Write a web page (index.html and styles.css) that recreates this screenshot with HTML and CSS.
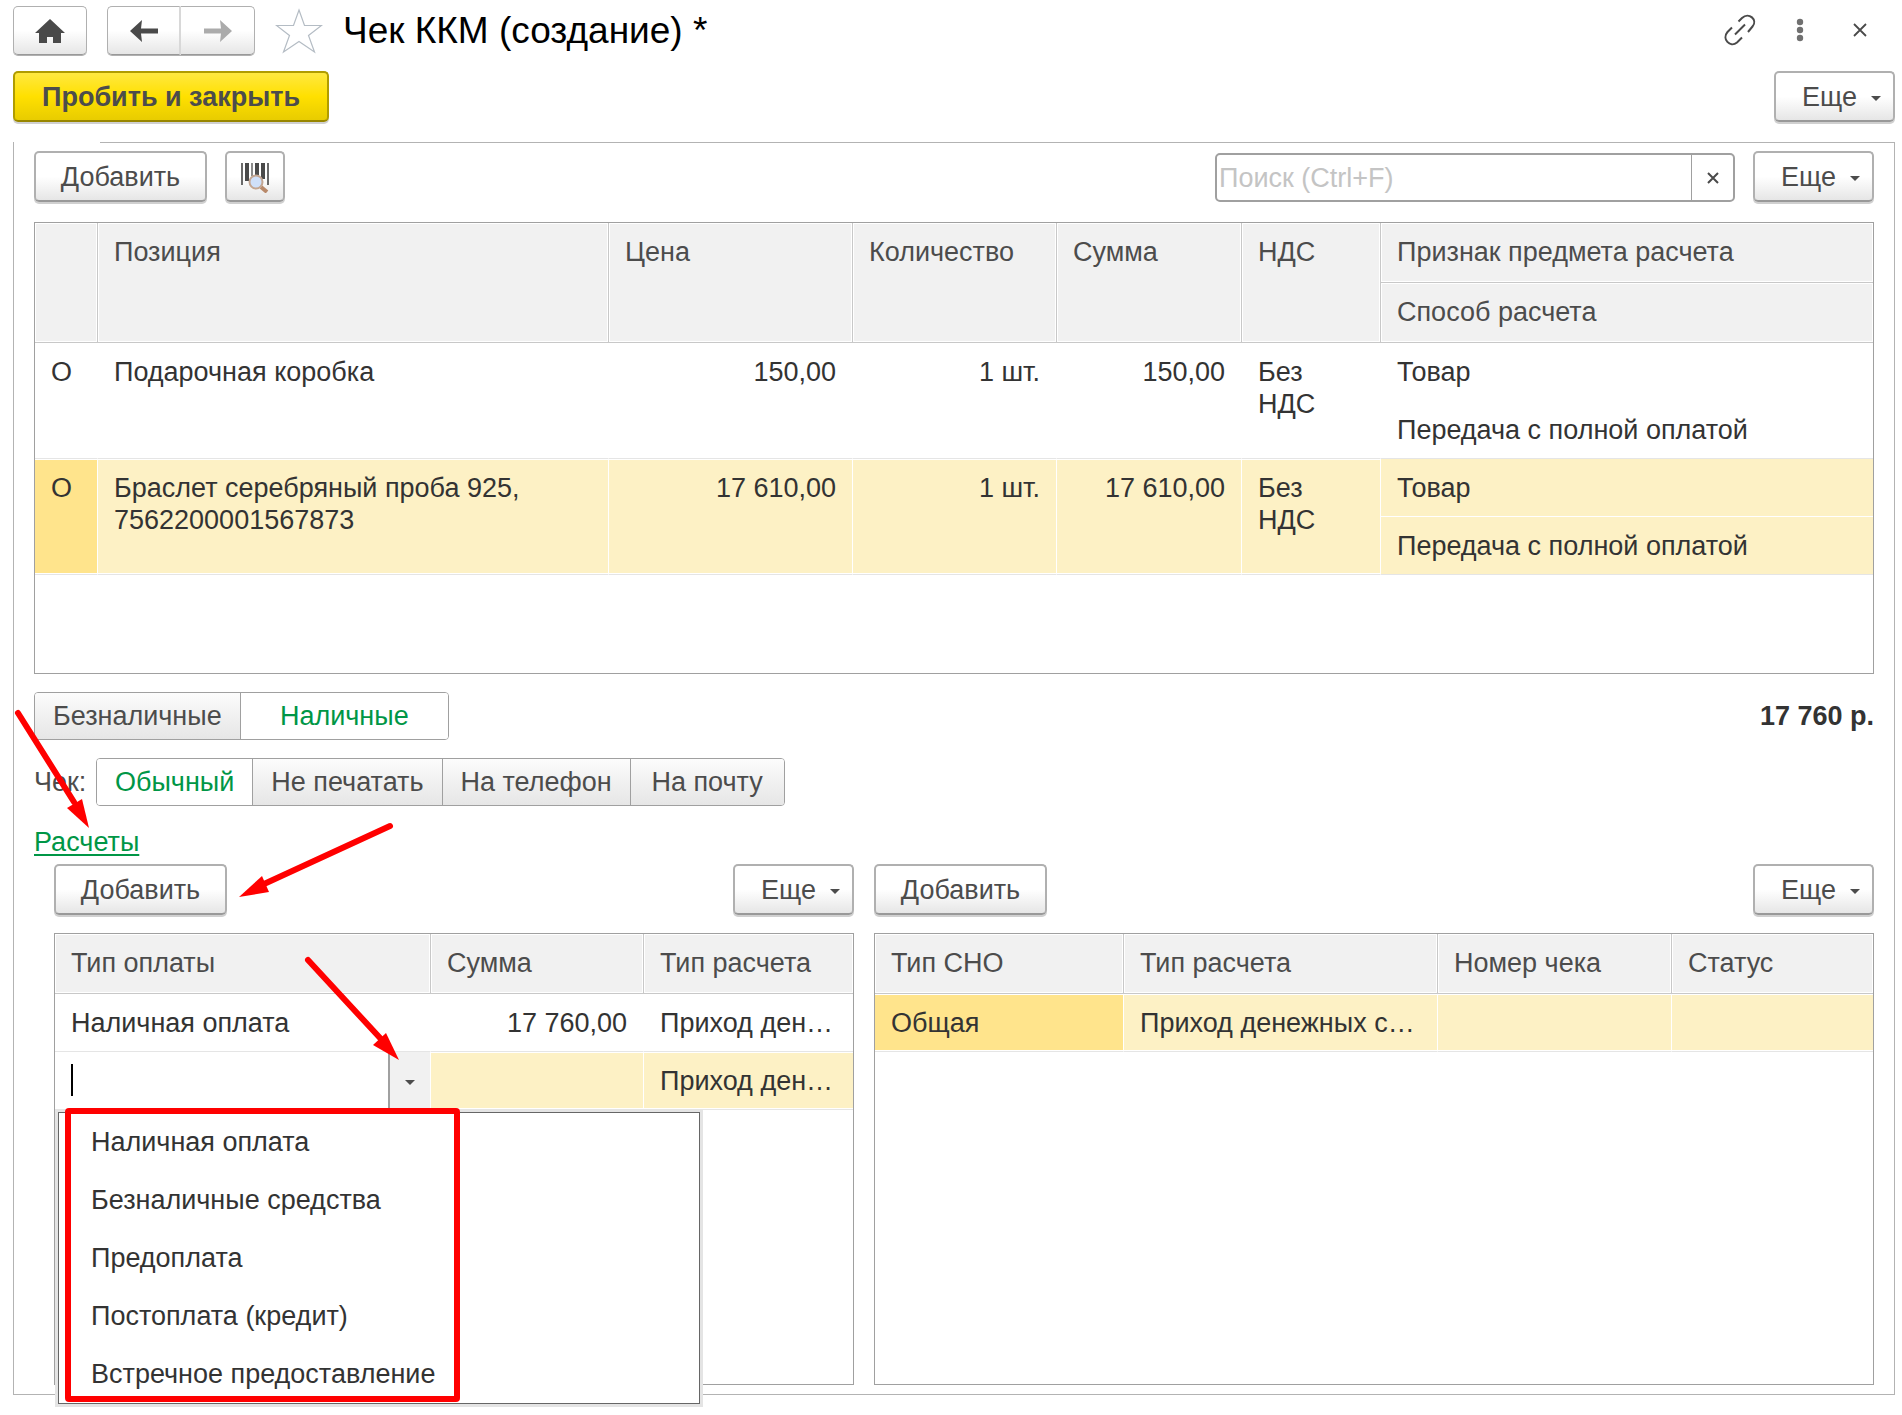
FILE: index.html
```html
<!DOCTYPE html>
<html lang="ru">
<head>
    <meta charset="UTF-8">
    <meta name="viewport" content="width=device-width, initial-scale=1.0">
    <title>Чек ККМ (создание) *</title>
    <link rel="stylesheet" href="styles.css">
</head>
<body>
    <header class="title-bar">
        <button class="btn btn-home" type="button" aria-label="Домой">
            <svg width="30" height="26" viewBox="0 0 30 26"><path d="M15 1 30 15H26V25H18V19H12V25H4V15H0Z" fill="#4a4a4a"/></svg>
        </button>
        <div class="nav-buttons">
            <button class="btn" type="button" aria-label="Назад">
                <svg width="28" height="24" viewBox="0 0 28 24"><path d="M0 12 12 1 11 9.500H28V14.500H11L12 23Z" fill="#4a4a4a"/></svg>
            </button>
            <button class="btn" type="button" aria-label="Вперед">
                <svg width="28" height="24" viewBox="0 0 28 24"><path d="M28 12 16 1 17 9.500H0V14.500H17L16 23Z" fill="#ababab"/></svg>
            </button>
        </div>
        <button class="icon-btn btn-star" type="button" aria-label="Избранное">
            <svg width="48" height="46" viewBox="0 0 48 46"><path d="M24 2 29.500 17.500H46.500L33.500 27.500 39.500 44 24 33.500 8.500 44 14.500 27.500 1.500 17.500H18.500Z" fill="#fff" stroke="#b4bcc4" stroke-width="1.200"/></svg>
        </button>
        <h1>Чек ККМ (создание) *</h1>
        <div class="window-buttons">
            <button class="icon-btn" type="button" aria-label="Ссылка">
                <svg width="32" height="32" viewBox="0 0 32 32" fill="none" stroke="#4a4a4a" stroke-width="2"><path d="M14.500 7.500 18 4C25-2.500 34 6 28.500 12.500L24 18M8 13.500 3.500 18C-2.500 25 6 34 13 28.500L18 23.500M11 20.500 21 10.500"/></svg>
            </button>
            <button class="icon-btn" type="button" aria-label="Меню">
                <svg width="8" height="24" viewBox="0 0 8 24" fill="#707070"><circle cx="4" cy="4" r="3.200"/><circle cx="4" cy="12" r="3.200"/><circle cx="4" cy="20" r="3.200"/></svg>
            </button>
            <button class="icon-btn" type="button" aria-label="Закрыть">
                <svg width="14" height="14" viewBox="0 0 14 14"><path d="M1 1 13 13M13 1 1 13" stroke="#4a4a4a" stroke-width="1.800"/></svg>
            </button>
        </div>
    </header>

    <div class="toolbar">
        <button class="btn btn-primary" type="button">Пробить и закрыть</button>
        <button class="btn btn-more" type="button">Еще</button>
    </div>

    <main class="form">
        <div class="toolbar">
            <div class="toolbar-group">
                <button class="btn btn-add" type="button">Добавить</button>
                <button class="btn btn-scan" type="button" aria-label="Поиск по штрихкоду">
                    <svg width="30" height="32" viewBox="0 0 30 32">
                        <path d="M2 2V24M28 2V24" stroke="#6a6a6a" stroke-width="2"/>
                        <path d="M7 2V20M17 2V14M23 2V18" stroke="#4a4a4a" stroke-width="4"/>
                        <path d="M12 2V15" stroke="#8a8a8a" stroke-width="2"/>
                        <path d="M21 26 27 31" stroke="#b8896a" stroke-width="4"/>
                        <circle cx="16" cy="21" r="6.500" fill="#cfe0fa" stroke="#c3a692" stroke-width="2"/>
                    </svg>
                </button>
            </div>
            <div class="toolbar-group">
                <div class="search">
                    <input type="text" placeholder="Поиск (Ctrl+F)" aria-label="Поиск">
                    <button type="button" aria-label="Очистить">
                        <svg width="12" height="12" viewBox="0 0 12 12"><path d="M1 1 11 11M11 1 1 11" stroke="#4a4a4a" stroke-width="2"/></svg>
                    </button>
                </div>
                <button class="btn btn-more" type="button">Еще</button>
            </div>
        </div>

        <div class="grid">
            <table>
                <colgroup>
                    <col class="c-mark"><col class="c-name"><col class="c-price"><col class="c-count"><col class="c-sum"><col class="c-vat"><col>
                </colgroup>
                <thead>
                    <tr>
                        <th rowspan="2"></th>
                        <th rowspan="2">Позиция</th>
                        <th rowspan="2">Цена</th>
                        <th rowspan="2">Количество</th>
                        <th rowspan="2">Сумма</th>
                        <th rowspan="2">НДС</th>
                        <th>Признак предмета расчета</th>
                    </tr>
                    <tr>
                        <th>Способ расчета</th>
                    </tr>
                </thead>
                <tbody>
                    <tr>
                        <td rowspan="2">О</td>
                        <td rowspan="2">Подарочная коробка</td>
                        <td rowspan="2" class="num">150,00</td>
                        <td rowspan="2" class="num">1 шт.</td>
                        <td rowspan="2" class="num">150,00</td>
                        <td rowspan="2">Без НДС</td>
                        <td class="upper">Товар</td>
                    </tr>
                    <tr>
                        <td>Передача с полной оплатой</td>
                    </tr>
                </tbody>
                <tbody class="selected">
                    <tr>
                        <td rowspan="2" class="current">О</td>
                        <td rowspan="2">Браслет серебряный проба 925, 7562200001567873</td>
                        <td rowspan="2" class="num">17 610,00</td>
                        <td rowspan="2" class="num">1 шт.</td>
                        <td rowspan="2" class="num">17 610,00</td>
                        <td rowspan="2">Без НДС</td>
                        <td class="upper">Товар</td>
                    </tr>
                    <tr>
                        <td>Передача с полной оплатой</td>
                    </tr>
                </tbody>
            </table>
        </div>

        <div class="row row-between">
            <div class="tumbler tumbler-wide" role="radiogroup" aria-label="Вид оплаты">
                <label><input type="radio" name="pay"><span>Безналичные</span></label>
                <label><input type="radio" name="pay" checked><span>Наличные</span></label>
            </div>
            <strong class="total">17 760 р.</strong>
        </div>

        <div class="row">
            <span class="row-label" id="receipt-label">Чек:</span>
            <div class="tumbler" role="radiogroup" aria-labelledby="receipt-label">
                <label><input type="radio" name="receipt" checked><span>Обычный</span></label>
                <label><input type="radio" name="receipt"><span>Не печатать</span></label>
                <label><input type="radio" name="receipt"><span>На телефон</span></label>
                <label><input type="radio" name="receipt"><span>На почту</span></label>
            </div>
        </div>

        <div class="section-title">
            <a href="#payments">Расчеты</a>
            <svg class="arrow arrow-link" width="80" height="122" viewBox="0 0 80 122"><path d="M4 4 60 93" stroke="#f00" stroke-width="6" stroke-linecap="round"/><path d="M75 119 53 99 68 90Z" fill="#f00"/></svg>
        </div>

        <div class="panels" id="payments">
            <section class="panel">
                <div class="toolbar">
                    <button class="btn btn-add" type="button">Добавить</button>
                    <button class="btn btn-more" type="button">Еще</button>
                </div>
                <div class="grid">
                    <table>
                        <colgroup><col class="c-pay"><col class="c-pay-sum"><col></colgroup>
                        <thead>
                            <tr><th>Тип оплаты</th><th>Сумма</th><th>Тип расчета</th></tr>
                        </thead>
                        <tbody>
                            <tr>
                                <td>Наличная оплата</td>
                                <td class="num">17 760,00</td>
                                <td class="clip">Приход ден…</td>
                            </tr>
                        </tbody>
                        <tbody class="selected">
                            <tr>
                                <td class="edit-cell">
                                    <div class="combo">
                                        <input type="text" aria-label="Тип оплаты">
                                        <button type="button" aria-label="Выбрать"><span class="caret"></span></button>
                                    </div>
                                </td>
                                <td></td>
                                <td class="clip">Приход ден…</td>
                            </tr>
                        </tbody>
                    </table>
                    <ul class="dropdown" role="listbox" aria-label="Тип оплаты">
                        <li role="option">Наличная оплата</li>
                        <li role="option">Безналичные средства</li>
                        <li role="option">Предоплата</li>
                        <li role="option">Постоплата (кредит)</li>
                        <li role="option">Встречное предоставление</li>
                    </ul>
                </div>
                <svg class="arrow arrow-add" width="160" height="80" viewBox="0 0 160 80"><path d="M154 4 28 62" stroke="#f00" stroke-width="6" stroke-linecap="round"/><path d="M3 75 26 54 33 70Z" fill="#f00"/></svg>
                <svg class="arrow arrow-choose" width="100" height="108" viewBox="0 0 100 108"><path d="M4 4 77 83" stroke="#f00" stroke-width="6" stroke-linecap="round"/><path d="M95 104 69 89 82 77Z" fill="#f00"/></svg>
            </section>

            <section class="panel">
                <div class="toolbar">
                    <button class="btn btn-add" type="button">Добавить</button>
                    <button class="btn btn-more" type="button">Еще</button>
                </div>
                <div class="grid">
                    <table>
                        <colgroup><col class="c-tax"><col class="c-kind"><col class="c-number"><col></colgroup>
                        <thead>
                            <tr><th>Тип СНО</th><th>Тип расчета</th><th>Номер чека</th><th>Статус</th></tr>
                        </thead>
                        <tbody class="selected">
                            <tr>
                                <td class="current">Общая</td>
                                <td class="clip">Приход денежных с…</td>
                                <td></td>
                                <td></td>
                            </tr>
                        </tbody>
                    </table>
                </div>
            </section>
        </div>
    </main>
</body>
</html>
```

FILE: styles.css
```css
*,
*::before,
*::after {
    box-sizing: border-box;
}

body {
    margin: 0;
    padding: 6px 7px 20px 13px;
    background-color: #fff;
    color: #333;
    font-family: "Liberation Sans", Arial, sans-serif;
    font-size: 27px;
    line-height: 32px;
}

button,
input {
    font: inherit;
    color: inherit;
}

svg {
    display: block;
}

/* Buttons */
.btn {
    display: flex;
    align-items: center;
    justify-content: center;
    height: 51px;
    padding: 0 27px;
    border: 2px solid #b0b0b0;
    border-bottom-color: #999;
    border-radius: 5px;
    background: linear-gradient(#fff 50%, #e6e6e6);
    box-shadow: 0 2px 0 #d0d0d0;
    color: #4c4c4c;
    white-space: nowrap;
}

.btn-primary {
    border-color: #b09c00;
    border-bottom-color: #988600;
    background: linear-gradient(#ffe840, #ffe000 50%, #e8cc00);
    font-weight: bold;
}

.btn-add {
    width: 173px;
}

.btn-more {
    width: 121px;
    gap: 14px;
    padding: 0 12px 0 26px;
}

.btn-more::after,
.caret {
    content: "";
    margin-top: 4px;
    border: 5px solid transparent;
    border-top-color: #4c4c4c;
    border-bottom: 0;
}

.btn-scan {
    width: 60px;
    padding: 0;
}

.icon-btn {
    display: flex;
    align-items: center;
    justify-content: center;
    width: 60px;
    height: 46px;
    padding: 0;
    border: 0;
    background: none;
}

/* Title bar */
.title-bar {
    display: flex;
    align-items: center;
    height: 49px;
    margin-bottom: 16px;
}

.title-bar .btn {
    width: 74px;
    height: 49px;
    padding: 0;
    border-width: 1px;
    box-shadow: 0 1px 0 #b0b0b0;
}

.nav-buttons {
    display: flex;
    margin-left: 20px;
}

.nav-buttons .btn:first-child {
    border-right: 2px solid #d8d8d8;
    border-radius: 5px 0 0 5px;
}

.nav-buttons .btn:last-child {
    border-left: 0;
    border-radius: 0 5px 5px 0;
}

.btn-star {
    width: 48px;
    margin: 0 20px;
}

h1 {
    margin: 0;
    color: #000;
    font-size: 37px;
    font-weight: normal;
    line-height: 40px;
}

.window-buttons {
    display: flex;
    margin-left: auto;
    padding: 0 5px 2px 0;
}

/* Toolbars */
.toolbar {
    display: flex;
    align-items: flex-end;
    justify-content: space-between;
    margin-bottom: 20px;
}

.toolbar-group {
    display: flex;
    align-items: flex-end;
    gap: 18px;
}

.search {
    display: flex;
    width: 520px;
    height: 49px;
    border: 2px solid #a0a0a0;
    border-radius: 5px;
}

.search input {
    flex: 1;
    min-width: 0;
    padding: 0 2px;
    border: 0;
    background: none;
    outline: none;
}

.search input::placeholder {
    color: #c4c4c4;
    opacity: 1;
}

.search button {
    display: flex;
    align-items: center;
    justify-content: center;
    width: 42px;
    padding: 0;
    border: 0;
    border-left: 1px solid #a0a0a0;
    background: none;
}

/* The top line of the frame starts after the group caption gap */
.form {
    padding: 9px 20px;
    border: 1px solid #b3b3b3;
    border-top: 0;
    background: linear-gradient(#b3b3b3, #b3b3b3) 86px 0 / 100% 1px no-repeat;
}

/* Tables */
.grid {
    position: relative;
    min-height: 452px;
    border: 1px solid #a0a0a0;
}

table {
    width: 100%;
    table-layout: fixed;
    border-collapse: separate;
    border-spacing: 0;
}

th,
td {
    height: 58px;
    padding: 13px 16px 12px;
    border-right: 1px solid transparent;
    border-bottom: 1px solid #e5e5e5;
    text-align: left;
    vertical-align: top;
    font-weight: normal;
}

th {
    height: 60px;
    border-color: #c8c8c8;
    background-color: #f1f1f1;
    box-shadow: inset 0 0 0 1px #fff;
    color: #4c4c4c;
}

th:last-child,
td:last-child {
    border-right: 0;
}

.num {
    text-align: right;
}

.upper {
    border-bottom-color: transparent;
}

.clip {
    overflow: hidden;
    text-overflow: ellipsis;
    white-space: nowrap;
}

.selected td {
    border-right-color: #fff;
    background-color: #fdf1c5;
    background-clip: padding-box;
    box-shadow: inset 0 -1px 0 #fff, inset 0 1px 0 #fff;
}

.selected .upper {
    border-bottom-color: #fff;
}

.selected .upper,
.selected tr:nth-child(2) td {
    box-shadow: none;
}

.selected .current {
    background-color: #ffe48c;
}

.c-mark { width: 63px; }
.c-name { width: 511px; }
.c-price { width: 244px; }
.c-count { width: 204px; }
.c-sum { width: 185px; }
.c-vat { width: 139px; }
.c-pay { width: 376px; }
.c-pay-sum { width: 213px; }
.c-tax { width: 249px; }
.c-kind { width: 314px; }
.c-number { width: 234px; }

/* Switches */
.row {
    display: flex;
    align-items: center;
    margin-top: 18px;
}

.row-between {
    justify-content: space-between;
}

.row-label {
    width: 62px;
    color: #4c4c4c;
    white-space: nowrap;
}

.total {
    white-space: nowrap;
}

.tumbler {
    display: flex;
    overflow: hidden;
    border: 1px solid #a0a0a0;
    border-radius: 4px;
}

.tumbler label {
    position: relative;
    min-width: 154px;
}

.tumbler label + label {
    border-left: 1px solid #a0a0a0;
}

.tumbler-wide {
    width: 415px;
}

.tumbler-wide label:last-child {
    flex: 1;
}

.tumbler input {
    position: absolute;
    opacity: 0;
}

.tumbler span {
    display: block;
    padding: 7px 18px;
    background: linear-gradient(#fcfcfc, #e6e6e6);
    color: #4c4c4c;
    text-align: center;
    white-space: nowrap;
}

.tumbler input:checked + span {
    background: #fff;
    color: #009646;
}

/* Payments */
.section-title {
    position: relative;
    margin: 20px 0 6px;
}

.section-title a {
    color: #009646;
    text-decoration-thickness: 2px;
    text-underline-offset: 3px;
    text-decoration-skip-ink: none;
}

.panels {
    display: grid;
    grid-template-columns: 4fr 5fr;
    gap: 20px;
    padding-left: 20px;
}

.panel {
    position: relative;
    min-width: 0;
}

.panel .toolbar {
    margin-bottom: 18px;
}

.edit-cell {
    padding: 0;
}

.combo {
    display: flex;
    height: 57px;
}

/* Text cursor of the active cell */
.combo input {
    flex: 1;
    min-width: 0;
    padding: 0 16px;
    border: 0;
    background: linear-gradient(#000, #000) 16px 12px / 2px 32px no-repeat #fff;
    outline: none;
}

.combo button {
    display: flex;
    align-items: center;
    justify-content: center;
    width: 42px;
    padding: 0;
    border: 0;
    border-left: 2px solid #a0a0a0;
    background-color: #f1f1f1;
}

.dropdown {
    position: absolute;
    top: 178px;
    left: 3px;
    z-index: 1;
    width: 642px;
    margin: 0;
    padding: 0;
    border: 1px solid #666;
    background-color: #fff;
    box-shadow: 0 0 0 3px #e4e4e4;
    list-style: none;
}

.dropdown li {
    padding: 13px 32px;
}

/* Red marks over the form */
.dropdown::after {
    content: "";
    position: absolute;
    top: -5px;
    left: 6px;
    width: 395px;
    height: 294px;
    border: 6px solid #f00;
    border-radius: 4px;
}

.arrow {
    position: absolute;
    z-index: 2;
    pointer-events: none;
}

.arrow-link {
    top: -117px;
    left: -20px;
}

.arrow-add {
    top: -42px;
    left: 182px;
}

.arrow-choose {
    top: 92px;
    left: 250px;
}
```
